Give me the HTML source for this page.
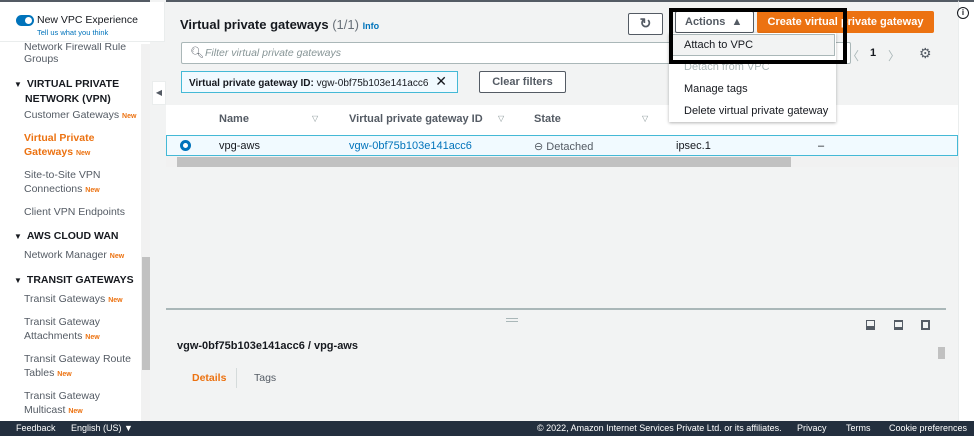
<!DOCTYPE html><html><head><style>
*{box-sizing:border-box;margin:0;padding:0}
body{width:974px;height:436px;overflow:hidden;font-family:"Liberation Sans",sans-serif;background:#f2f3f3;position:relative;color:#16191f}
.a{position:absolute}
.side{left:0;top:0;width:150px;height:421px;background:#fff;border-top:2px solid #545b64}
.s{position:absolute;left:24px;font-size:10.5px;color:#545b64;line-height:14px}
.h{position:absolute;left:14px;font-size:10.5px;font-weight:bold;color:#16191f;line-height:14px}
.h:before{content:"▼";font-size:8px;margin-right:5px}
.n{color:#ec7211;font-size:7px;font-weight:bold}
.main{left:166px;top:0;width:792px;height:421px;border-top:2px solid #545b64}
.btn{position:absolute;background:#fff;border:1px solid #545b64;border-radius:2px;font-size:11px;font-weight:bold;color:#545b64;text-align:center}
.th{position:absolute;top:111px;font-size:11px;font-weight:bold;color:#545b64}
.tri{position:absolute;top:112px;font-size:8px;color:#879596}
.dd{position:absolute;left:684px;font-size:11px;color:#16191f}
</style></head><body>
<div class="a side">
<div class="a" style="left:0;top:0;width:165px;height:40px;background:#fff;border-bottom:1px solid #eaeded;border-right:1px solid #eaeded"></div>
<div class="a" style="left:16px;top:13px;width:18px;height:11px;border-radius:6px;background:#0073bb"><div class="a" style="right:2px;top:2px;width:7px;height:7px;border-radius:50%;background:#fff"></div></div>
<div class="a" style="left:37px;top:12px;font-size:10.5px">New VPC Experience</div>
<div class="a" style="left:37px;top:26px;font-size:7.5px;color:#0073bb">Tell us what you think</div>
<div class="s" style="top:38px;clip-path:inset(3px 0 0 0)">Network Firewall Rule</div>
<div class="s" style="top:50px">Groups</div>
<div class="h" style="top:75px">VIRTUAL PRIVATE<br><span style="margin-left:11px">NETWORK (VPN)</span></div>
<div class="s" style="top:106px">Customer Gateways <span class="n">New</span></div>
<div class="s" style="top:129px;color:#ec7211;font-weight:bold">Virtual Private<br>Gateways <span class="n">New</span></div>
<div class="s" style="top:166px">Site-to-Site VPN<br>Connections <span class="n">New</span></div>
<div class="s" style="top:203px">Client VPN Endpoints</div>
<div class="h" style="top:227px">AWS CLOUD WAN</div>
<div class="s" style="top:246px">Network Manager <span class="n">New</span></div>
<div class="h" style="top:271px">TRANSIT GATEWAYS</div>
<div class="s" style="top:290px">Transit Gateways <span class="n">New</span></div>
<div class="s" style="top:313px">Transit Gateway<br>Attachments <span class="n">New</span></div>
<div class="s" style="top:350px">Transit Gateway Route<br>Tables <span class="n">New</span></div>
<div class="s" style="top:387px">Transit Gateway<br>Multicast <span class="n">New</span></div>
<div class="a" style="left:141px;top:42px;width:9px;height:379px;background:#f1f1f1"></div>
<div class="a" style="left:142px;top:255px;width:8px;height:113px;background:#c1c1c1"></div>
</div>
<div class="a" style="left:152px;top:81px;width:14px;height:24px;background:#fff;border:1px solid #eaeded;font-size:8px;color:#545b64;text-align:center;line-height:22px">◀</div>
<div class="a main">
<div class="a" style="left:14px;top:15px;font-size:13px;font-weight:bold">Virtual private gateways <span style="font-weight:normal;color:#687078">(1/1)</span> <span style="font-size:9px;color:#0073bb">Info</span></div>
<div class="a" style="left:15px;top:40px;width:670px;height:22px;background:#fff;border:1px solid #aab7b8;border-radius:2px"></div>
<div class="a" style="left:24px;top:44px;font-size:11px;color:#545b64">&#x1F50D;&#xFE0E;</div>
<div class="a" style="left:39px;top:45px;font-size:10.5px;font-style:italic;color:#879596">Filter virtual private gateways</div>
<div class="a" style="left:15px;top:69px;width:277px;height:22px;background:#f1faff;border:1px solid #44b9d6;font-size:10px;font-weight:bold;padding:4px 7px;color:#16191f">Virtual private gateway ID: <span style="font-weight:normal">vgw-0bf75b103e141acc6</span> <span style="font-size:14px;font-weight:normal;margin-left:4px;line-height:10px">✕</span></div>
<div class="btn" style="left:313px;top:69px;width:87px;height:22px;line-height:20px">Clear filters</div>
<div class="a" style="left:0;top:103px;width:792px;height:30px;background:#fff"></div>
<div class="th" style="left:53px">Name</div><div class="tri" style="left:146px">▽</div>
<div class="th" style="left:183px">Virtual private gateway ID</div><div class="tri" style="left:332px">▽</div>
<div class="th" style="left:368px">State</div><div class="tri" style="left:476px">▽</div>
<div class="a" style="left:0;top:133px;width:792px;height:21px;background:#f1faff;border:1px solid #44b9d6"></div>
<div class="a" style="left:14px;top:138px;width:11px;height:11px;border-radius:50%;border:3px solid #0073bb;background:#fff"></div>
<div class="a" style="left:53px;top:138px;font-size:11px">vpg-aws</div>
<div class="a" style="left:183px;top:138px;font-size:11px;color:#0073bb">vgw-0bf75b103e141acc6</div>
<div class="a" style="left:368px;top:138px;font-size:11px;color:#545b64">⊖ Detached</div>
<div class="a" style="left:510px;top:138px;font-size:11px">ipsec.1</div>
<div class="a" style="left:652px;top:138px;font-size:11px">–</div>
<div class="a" style="left:0;top:155px;width:792px;height:10px;background:#f1f1f1"></div>
<div class="a" style="left:11px;top:155px;width:614px;height:10px;background:#c1c1c1"></div>
<div class="a" style="left:0;top:306px;width:780px;height:2px;background:#aab7b8"></div>
<div class="a" style="left:340px;top:316px;width:12px;height:4px;border-top:1px solid #aab7b8;border-bottom:1px solid #aab7b8"></div>
<div class="a" style="left:700px;top:318px;width:9px;height:10px;border:1px solid #545b64;border-bottom-width:4px"></div>
<div class="a" style="left:728px;top:318px;width:9px;height:10px;border:1px solid #545b64;border-width:2px 1px 3px"></div>
<div class="a" style="left:755px;top:318px;width:9px;height:10px;border:2px solid #545b64"></div>
<div class="a" style="left:11px;top:338px;font-size:11px;font-weight:bold">vgw-0bf75b103e141acc6 / vpg-aws</div>
<div class="a" style="left:26px;top:370px;font-size:10.5px;font-weight:bold;color:#ec7211">Details</div>
<div class="a" style="left:70px;top:366px;width:1px;height:20px;background:#d5dbdb"></div>
<div class="a" style="left:88px;top:370px;font-size:10.5px;color:#545b64">Tags</div>
<div class="a" style="left:772px;top:345px;width:7px;height:12px;background:#c1c1c1"></div>
<div class="btn" style="left:462px;top:11px;width:35px;height:22px;font-size:14px;line-height:19px">↻</div>
<div class="a" style="left:681px;top:45px;font-size:12px;color:#aab7b8">〈</div>
<div class="a" style="left:704px;top:45px;font-size:11px;font-weight:bold">1</div>
<div class="a" style="left:722px;top:45px;font-size:12px;color:#aab7b8">〉</div>
<div class="a" style="left:753px;top:43px;font-size:14px;color:#545b64">⚙</div>
</div>
<div class="a" style="left:958px;top:0;width:16px;height:421px;background:#fff;border-left:1px solid #eaeded;border-top:2px solid #545b64"></div>
<div class="a" style="left:957px;top:7px;width:12px;height:12px;border:1px solid #16191f;border-radius:50%;font-size:8px;text-align:center;line-height:10px;font-weight:bold">i</div>
<div class="btn" style="left:675px;top:11px;width:79px;height:22px;line-height:20px;text-align:left;padding-left:9px">Actions &nbsp;▲</div>
<div class="a" style="left:757px;top:11px;width:177px;height:22px;background:#ec7211;color:#fff;font-size:11px;font-weight:bold;text-align:center;line-height:22px;border-radius:2px">Create virtual private gateway</div>
<div class="a" style="left:669px;top:33px;width:167px;height:89px;background:#fff;box-shadow:0 1px 3px rgba(0,0,0,.3)"></div>
<div class="a" style="left:670px;top:34px;width:165px;height:22px;background:#f2f3f3;border:1px solid #aab7b8"></div>
<div class="dd" style="top:39px">Attach to VPC</div>
<div class="dd" style="top:61px;color:#aab7b8">Detach from VPC</div>
<div class="dd" style="top:83px">Manage tags</div>
<div class="dd" style="top:105px">Delete virtual private gateway</div>
<div class="a" style="left:669px;top:8px;width:178px;height:56px;border:4px solid #000"></div>
<div class="a" style="left:0;top:421px;width:974px;height:15px;background:#232f3e;color:#fff;font-size:9px;line-height:15px">
<span class="a" style="left:16px">Feedback</span><span class="a" style="left:71px">English (US) ▼</span>
<span class="a" style="left:537px">© 2022, Amazon Internet Services Private Ltd. or its affiliates.</span>
<span class="a" style="left:797px">Privacy</span><span class="a" style="left:846px">Terms</span><span class="a" style="left:889px">Cookie preferences</span></div>
</body></html>
